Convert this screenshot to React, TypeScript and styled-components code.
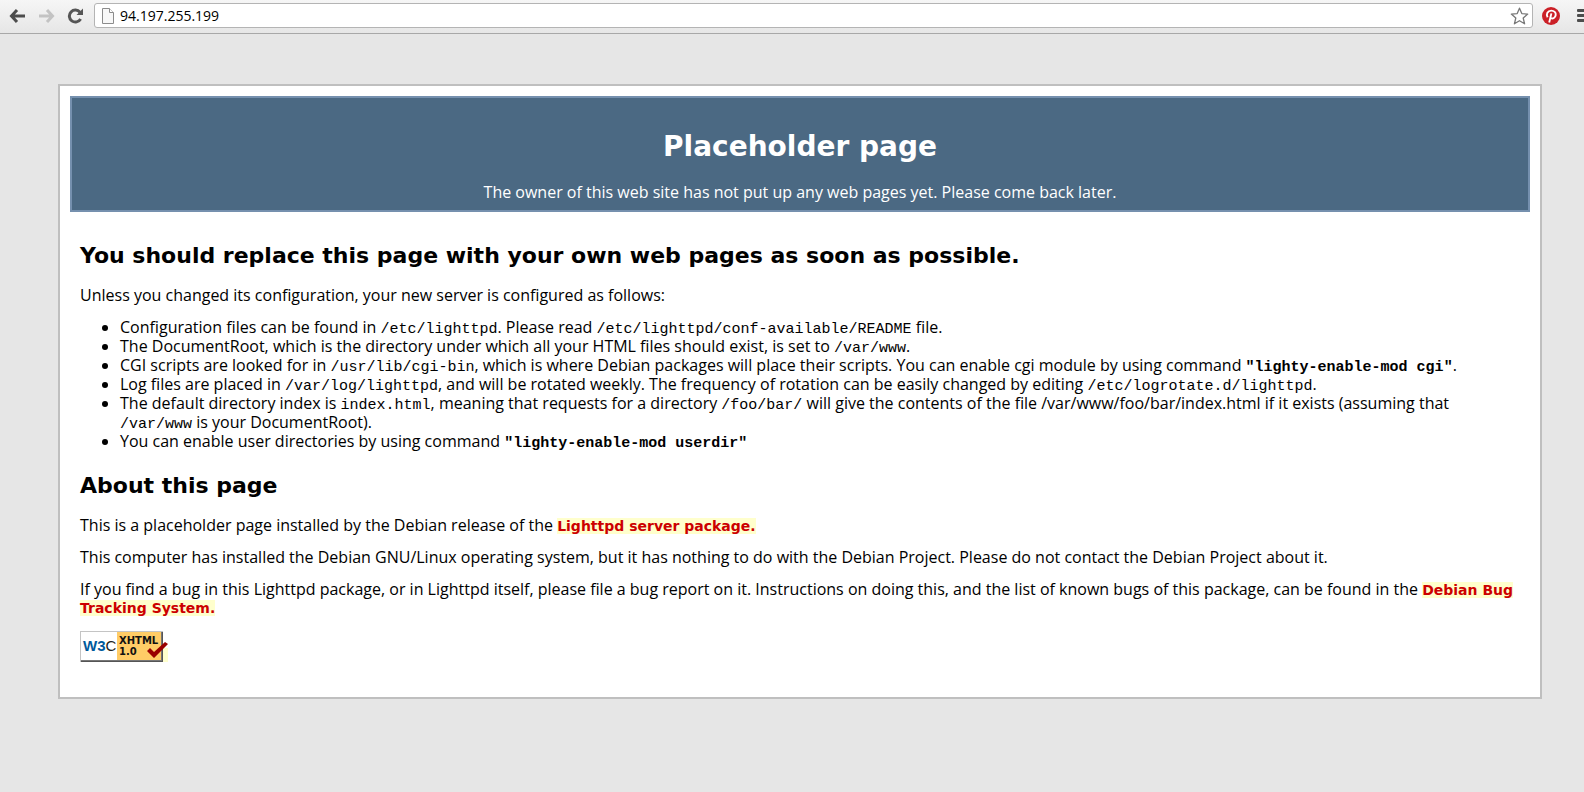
import React from "react";
import styled, { createGlobalStyle } from "styled-components";

const GlobalStyle = createGlobalStyle`
  * { box-sizing: border-box; }
  body {
    margin: 0;
    background: #e6e6e6;
    color: #000;
    font: 16px/18px "Open Sans", Verdana, sans-serif;
  }
  h1, h2, p, ul { margin: 0; }
  svg { display: block; flex: none; }
`;

const Toolbar = styled.nav`
  display: flex;
  align-items: center;
  height: 34px;
  padding: 0 0 2px 9px;
  overflow: hidden;
  background: linear-gradient(#f6f6f6, #e6e6e6);
  border-bottom: 1px solid #a8a8a8;
`;

const ToolButton = styled.button<{ $gap?: number }>`
  display: flex;
  flex: none;
  margin: 0 ${(p) => p.$gap ?? 0}px 0 0;
  padding: 0;
  border: 0;
  background: none;
`;

const MenuButton = styled(ToolButton)`
  width: 7px;
  overflow: hidden;
`;

const AddressBar = styled.div`
  display: flex;
  flex: 1;
  align-items: center;
  height: 25px;
  margin-right: 9px;
  padding: 0 3px 0 7px;
  background: #fff;
  border: 1px solid #b4b4b4;
  border-radius: 3px;
`;

const AddressInput = styled.input`
  flex: 1;
  min-width: 0;
  height: 22px;
  padding: 0 0 0 6px;
  border: 0;
  outline: 0;
  background: none;
  color: #000;
  font: 14px/22px "Open Sans", "Noto Sans", sans-serif;
`;

const Panel = styled.main`
  margin: 50px 42px 50px 58px;
  padding: 10px 10px 35px;
  background: #fff;
  border: 2px solid #bfbfbf;
`;

const Banner = styled.header`
  padding: 31px 10px 9px;
  background: #4b6983;
  border: 2px solid #7590ae;
  color: #fff;
  text-align: center;
`;

const Title = styled.h1`
  margin-bottom: 18px;
  font-family: "DejaVu Sans", Verdana, sans-serif;
  font-size: 28px;
  line-height: 36px;
`;

const Section = styled.section<{ $top: number }>`
  padding: ${(p) => p.$top}px 10px 0;
`;

const Heading = styled.h2`
  margin-bottom: 16px;
  font-family: "DejaVu Sans", Verdana, sans-serif;
  font-size: 22px;
  line-height: 28px;
`;

const Paragraph = styled.p`
  & + & { margin-top: 14px; }
`;

const List = styled.ul`
  margin-top: 14px;
  padding-left: 40px;
  line-height: 19px;
`;

const Code = styled.code<{ $bold?: boolean }>`
  font-family: "Liberation Mono", "Courier New", monospace;
  font-size: 15px;
  font-weight: ${(p) => (p.$bold ? 700 : 400)};
  line-height: 1;
`;

const TextLink = styled.a`
  background: #ffffcc;
  color: #cc0000;
  font-family: "DejaVu Sans", Verdana, sans-serif;
  font-size: 14px;
  font-weight: 700;
  line-height: 1;
  text-decoration: none;
`;

const BadgeLink = styled.a`
  display: block;
  width: fit-content;
  margin-top: 15px;
  background: linear-gradient(#fff 17px, #ffffcc 17px);
`;

const BackIcon = () => (
  <svg width="17" height="16" viewBox="0 0 17 16" fill="none" stroke="#4d4d4d" strokeWidth="3">
    <path d="M8 2 2.5 8 8 14M3 8h13" />
  </svg>
);

const ForwardIcon = () => (
  <svg width="17" height="16" viewBox="0 0 17 16" fill="none" stroke="#c3c3c3" strokeWidth="3">
    <path d="m9 2 5.5 6L9 14M14 8H1" />
  </svg>
);

const ReloadIcon = () => (
  <svg width="17" height="16" viewBox="0 0 17 16">
    <path d="M13 4.2A6 6 0 1 0 13.6 11" fill="none" stroke="#555" strokeWidth="3" />
    <path d="M16 .5V7H9.5z" fill="#555" />
  </svg>
);

const PageIcon = () => (
  <svg width="12" height="16" viewBox="0 0 12 16" fill="#f8f8f8" stroke="#8c8c8c">
    <path d="M.5.5h7l4 4v11H.5z" />
    <path d="M7.5.5v4h4" fill="#fff" />
  </svg>
);

const StarIcon = () => (
  <svg width="19" height="18" viewBox="0 0 19 18">
    <path
      d="m9.5 1.2 2.3 5.4 5.9.5-4.5 3.9 1.4 5.8-5.1-3.1-5.1 3.1L5.8 11 1.3 7.1l5.9-.5z"
      fill="#fff"
      stroke="#777"
      strokeWidth="1.3"
      strokeLinejoin="round"
    />
  </svg>
);

const PinterestIcon = () => (
  <svg width="18" height="18" viewBox="0 0 18 18">
    <circle cx="9" cy="9" r="9" fill="#cb2027" />
    <path
      d="M5.6 10.3C3.7 7 5.7 3.6 9.2 3.6c3 0 4.9 1.9 4.5 4.5-.4 2.7-2.8 4.2-5 2.9M9.4 6.4 7.2 15.5"
      fill="none"
      stroke="#fff"
      strokeWidth="1.9"
    />
  </svg>
);

const MenuIcon = () => (
  <svg width="16" height="13" viewBox="0 0 16 13" fill="#4d4d4d">
    <rect width="16" height="3" rx="1" />
    <rect y="5" width="16" height="3" rx="1" />
    <rect y="10" width="16" height="3" rx="1" />
  </svg>
);

const XhtmlBadge = () => (
  <svg width="88" height="31" viewBox="0 0 88 31" role="img" aria-label="Valid XHTML 1.0">
    <rect width="83" height="31" fill="#c4c4c4" />
    <path d="M1 30h81V1h1v30H1z" fill="#555" />
    <rect x="1" y="1" width="36" height="28" fill="#fff" />
    <rect x="37" y="1" width="44" height="28" fill="#ffcc66" />
    <path d="M81 1h1v29H1v-1h80z" fill="#777" />
    <text x="3" y="20" fontFamily="Liberation Sans, sans-serif" fontSize="15" fill="#005a9c">
      <tspan fontWeight="700">W3</tspan>
      <tspan fill="#222">C</tspan>
    </text>
    <g fontFamily="DejaVu Sans, sans-serif" fontSize="10" fontWeight="700" fill="#111">
      <text x="39" y="13">XHTML</text>
      <text x="39" y="24">1.0</text>
    </g>
    <path d="m67 20 3-3 4 4 11-10 3 2-14 14z" fill="#990000" />
  </svg>
);

export default function App() {
  return (
    <>
      <GlobalStyle />
      <Toolbar aria-label="Browser">
        <ToolButton aria-label="Back" $gap={12}><BackIcon /></ToolButton>
        <ToolButton aria-label="Forward" $gap={12}><ForwardIcon /></ToolButton>
        <ToolButton aria-label="Reload" $gap={10}><ReloadIcon /></ToolButton>
        <AddressBar>
          <PageIcon />
          <AddressInput aria-label="Address" defaultValue="94.197.255.199" />
          <ToolButton aria-label="Bookmark"><StarIcon /></ToolButton>
        </AddressBar>
        <ToolButton aria-label="Pinterest" $gap={17}><PinterestIcon /></ToolButton>
        <MenuButton aria-label="Menu"><MenuIcon /></MenuButton>
      </Toolbar>
      <Panel>
        <Banner>
          <Title>Placeholder page</Title>
          <p>The owner of this web site has not put up any web pages yet. Please come back later.</p>
        </Banner>
        <Section $top={30}>
          <Heading>You should replace this page with your own web pages as soon as possible.</Heading>
          <Paragraph>Unless you changed its configuration, your new server is configured as follows:</Paragraph>
          <List>
            <li>Configuration files can be found in <Code>/etc/lighttpd</Code>. Please read <Code>/etc/lighttpd/conf-available/README</Code> file.</li>
            <li>The DocumentRoot, which is the directory under which all your HTML files should exist, is set to <Code>/var/www</Code>.</li>
            <li>CGI scripts are looked for in <Code>/usr/lib/cgi-bin</Code>, which is where Debian packages will place their scripts. You can enable cgi module by using command <Code $bold>"lighty-enable-mod cgi"</Code>.</li>
            <li>Log files are placed in <Code>/var/log/lighttpd</Code>, and will be rotated weekly. The frequency of rotation can be easily changed by editing <Code>/etc/logrotate.d/lighttpd</Code>.</li>
            <li>The default directory index is <Code>index.html</Code>, meaning that requests for a directory <Code>/foo/bar/</Code> will give the contents of the file /var/www/foo/bar/index.html if it exists (assuming that <Code>/var/www</Code> is your DocumentRoot).</li>
            <li>You can enable user directories by using command <Code $bold>"lighty-enable-mod userdir"</Code></li>
          </List>
        </Section>
        <Section $top={21}>
          <Heading>About this page</Heading>
          <Paragraph>This is a placeholder page installed by the Debian release of the <TextLink href="#lighttpd">Lighttpd server package.</TextLink></Paragraph>
          <Paragraph>This computer has installed the Debian GNU/Linux operating system, but it has nothing to do with the Debian Project. Please do not contact the Debian Project about it.</Paragraph>
          <Paragraph>If you find a bug in this Lighttpd package, or in Lighttpd itself, please file a bug report on it. Instructions on doing this, and the list of known bugs of this package, can be found in the <TextLink href="#bugs">Debian Bug Tracking System.</TextLink></Paragraph>
          <BadgeLink href="#validator"><XhtmlBadge /></BadgeLink>
        </Section>
      </Panel>
    </>
  );
}
